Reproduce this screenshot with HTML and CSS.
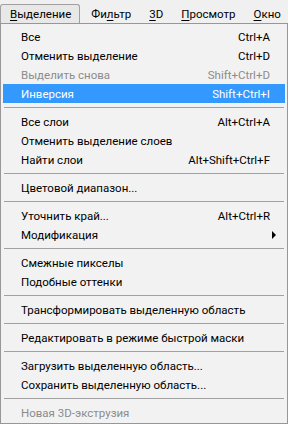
FILE: index.html
```html
<!DOCTYPE html>
<html>
<head>
    <title>Выделение</title>
    <link rel="stylesheet" href="styles.css">
</head>
<body>
    <div class="menubar">
        <span class="menu active"><u>В</u>ыделение</span>
        <span class="menu">Фи<u>л</u>ьтр</span>
        <span class="menu"><u>3</u>D</span>
        <span class="menu"><u>П</u>росмотр</span>
        <span class="menu"><u>О</u>кно</span>
    </div>

    <div class="dropdown">
        <div class="item"><span>Все</span><span class="key">Ctrl+A</span></div>
        <div class="item"><span>Отменить выделение</span><span class="key">Ctrl+D</span></div>
        <div class="item disabled"><span>Выделить снова</span><span class="key">Shift+Ctrl+D</span></div>
        <div class="item selected"><span>Инверсия</span><span class="key">Shift+Ctrl+I</span></div>
        <div class="sep"></div>
        <div class="item"><span>Все слои</span><span class="key">Alt+Ctrl+A</span></div>
        <div class="item"><span>Отменить выделение слоев</span></div>
        <div class="item"><span>Найти слои</span><span class="key">Alt+Shift+Ctrl+F</span></div>
        <div class="sep"></div>
        <div class="item"><span>Цветовой диапазон...</span></div>
        <div class="sep"></div>
        <div class="item"><span>Уточнить край...</span><span class="key">Alt+Ctrl+R</span></div>
        <div class="item sub"><span>Модификация</span></div>
        <div class="sep"></div>
        <div class="item"><span>Смежные пикселы</span></div>
        <div class="item"><span>Подобные оттенки</span></div>
        <div class="sep"></div>
        <div class="item"><span>Трансформировать выделенную область</span></div>
        <div class="sep"></div>
        <div class="item"><span>Редактировать в режиме быстрой маски</span></div>
        <div class="sep"></div>
        <div class="item"><span>Загрузить выделенную область...</span></div>
        <div class="item"><span>Сохранить выделенную область...</span></div>
        <div class="sep"></div>
        <div class="item disabled"><span>Новая 3D-экструзия</span></div>
    </div>
</body>
</html>
```

FILE: styles.css
```css
body {
    margin: 0;
    width: 288px;
    height: 424px;
    overflow: hidden;
    background-color: #f0f0f0;
    font-family: Roboto, "Noto Sans", sans-serif;
    font-size: 11.5px;
    color: #000;
}

.menubar {
    display: flex;
    height: 23px;
    padding-top: 4px;
    box-sizing: border-box;
    background-color: #f0f0f0;
    overflow: hidden;
}

.menu {
    display: flex;
    align-items: center;
    padding: 0 8px 0 9px;
    margin-right: -1px;
    border: 1px solid transparent;
    border-bottom: none;
    white-space: nowrap;
}

.menu u {
    text-decoration: underline;
    text-underline-offset: 2px;
}

.menu.active {
    background-color: #e8e8e8;
    border-color: #a0a0a0;
    border-radius: 3px 3px 0 0;
    margin-right: 1px;
}

.dropdown {
    display: flex;
    flex-direction: column;
    border: 1px solid #979797;
    padding: 3px 2px 1px 2px;
    background-color: #f2f2f2;
}

.item {
    display: flex;
    justify-content: space-between;
    align-items: center;
    height: 19px;
    padding: 0 15px 0 18px;
    position: relative;
    white-space: nowrap;
}

.item.disabled {
    color: #8c8c8c;
}

.item.selected {
    background-color: #3399ff;
    color: #fff;
}

.item.sub::after {
    content: "";
    position: absolute;
    right: 9px;
    top: 6px;
    border-left: 4px solid #000;
    border-top: 4px solid transparent;
    border-bottom: 4px solid transparent;
}

.sep {
    height: 1px;
    margin: 4px 1px 4px 1px;
    background-color: #a0a0a0;
}
```
